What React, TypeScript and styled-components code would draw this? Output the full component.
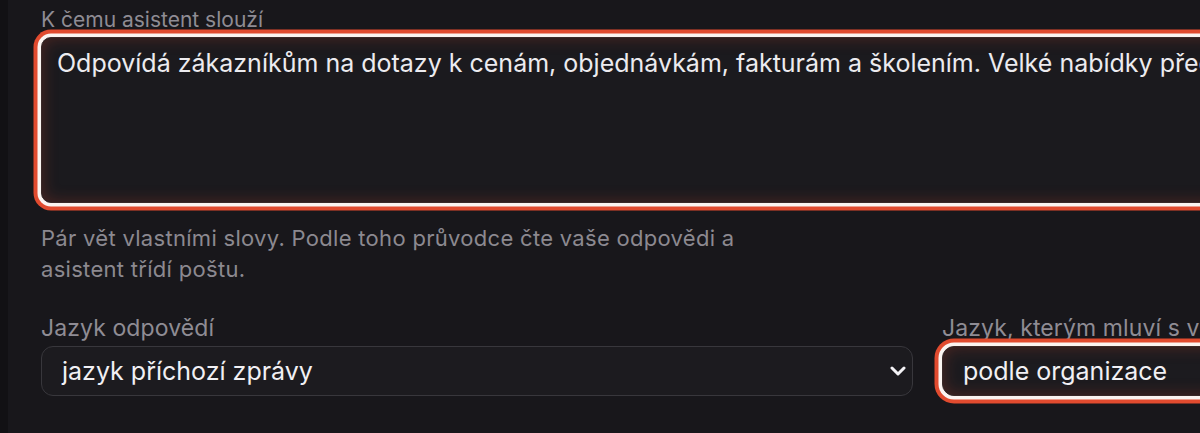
import { createGlobalStyle, styled } from 'styled-components';

const GlobalStyle = createGlobalStyle`
  html, body {
    margin: 0;
    padding: 0;
    background: #18171b;
    overflow: hidden;
  }

  * {
    box-sizing: border-box;
  }
`;

const invalidRing = `
  box-shadow:
    0 0 0 3.5px #fbf4f1,
    0 0 0 7.5px #e14b2f,
    inset 0 0 16px rgba(225, 75, 47, 0.26);
`;

export default function App() {
  return (
    <>
      <GlobalStyle />
      <Page>
        <Sidebar />
        <Main>
          <Content>
            <Field>
              <Label>K čemu asistent slouží</Label>
              <TextArea
                rows={4}
                defaultValue="Odpovídá zákazníkům na dotazy k cenám, objednávkám, fakturám a školením. Velké nabídky předává obchodnímu oddělení."
              />
            </Field>
            <Hint>
              Pár vět vlastními slovy. Podle toho průvodce čte vaše odpovědi a
              asistent třídí poštu.
            </Hint>
            <Row>
              <Field $gap={5}>
                <Label $size={23}>Jazyk odpovědí</Label>
                <Select>
                  <span>jazyk příchozí zprávy</span>
                  <Chevron />
                </Select>
              </Field>
              <Field $gap={5}>
                <Label $size={23}>Jazyk, kterým mluví s vámi</Label>
                <Select $invalid>
                  <span>podle organizace</span>
                  <Chevron />
                </Select>
              </Field>
            </Row>
          </Content>
        </Main>
      </Page>
    </>
  );
}

function Chevron() {
  return (
    <ChevronIcon viewBox="0 0 16 10" width="16" height="10" aria-hidden>
      <path
        d="M2 2l6 6 6-6"
        fill="none"
        stroke="#f4f3f6"
        strokeWidth="3"
        strokeLinecap="round"
        strokeLinejoin="round"
      />
    </ChevronIcon>
  );
}

const Page = styled.div`
  display: flex;
  min-height: 433px;
  font-family: Inter, 'Noto Sans', sans-serif;
`;

const Sidebar = styled.aside`
  width: 8px;
  flex-shrink: 0;
  background: #121114;
`;

const Main = styled.main`
  flex: 1;
  padding: 7px 0 0 33px;
  overflow: hidden;
`;

const Content = styled.div`
  width: 1774px;
  display: flex;
  flex-direction: column;
`;

const Field = styled.div<{ $gap?: number }>`
  display: flex;
  flex-direction: column;
  gap: ${({ $gap = 4 }) => $gap}px;
  min-width: 0;
`;

const Label = styled.label<{ $size?: number }>`
  font-size: ${({ $size = 21 }) => $size}px;
  letter-spacing: ${({ $size = 21 }) => ($size > 21 ? '0.1px' : '0')};
  line-height: 26px;
  color: #8f8c94;
  white-space: nowrap;
`;

const TextArea = styled.textarea`
  height: 166px;
  resize: none;
  padding: 9px 15px;
  border: 1px solid #3a2a29;
  border-radius: 10px;
  background: #1b1a1e;
  color: #ecebef;
  font: 25px/32px Inter, 'Noto Sans', sans-serif;
  outline: none;
  white-space: nowrap;
  overflow: hidden;
  ${invalidRing}
`;

const Hint = styled.p`
  margin: 20px 0 0;
  max-width: 740px;
  font-size: 22px;
  letter-spacing: 0.3px;
  line-height: 31px;
  color: #8c8990;
`;

const Row = styled.div`
  margin-top: 30px;
  display: grid;
  grid-template-columns: 872px 1fr;
  gap: 29px;
`;

const Select = styled.div<{ $invalid?: boolean }>`
  height: 50px;
  display: flex;
  align-items: center;
  justify-content: space-between;
  padding: 0 6px 0 20px;
  border: 1px solid ${({ $invalid }) => ($invalid ? '#3a2a29' : '#38373c')};
  border-radius: 12px;
  background: #1c1b1f;
  color: #f1f0f4;
  font-size: 25px;
  line-height: 30px;
  ${({ $invalid }) => ($invalid ? invalidRing : '')}
`;

const ChevronIcon = styled.svg`
  flex-shrink: 0;
`;
